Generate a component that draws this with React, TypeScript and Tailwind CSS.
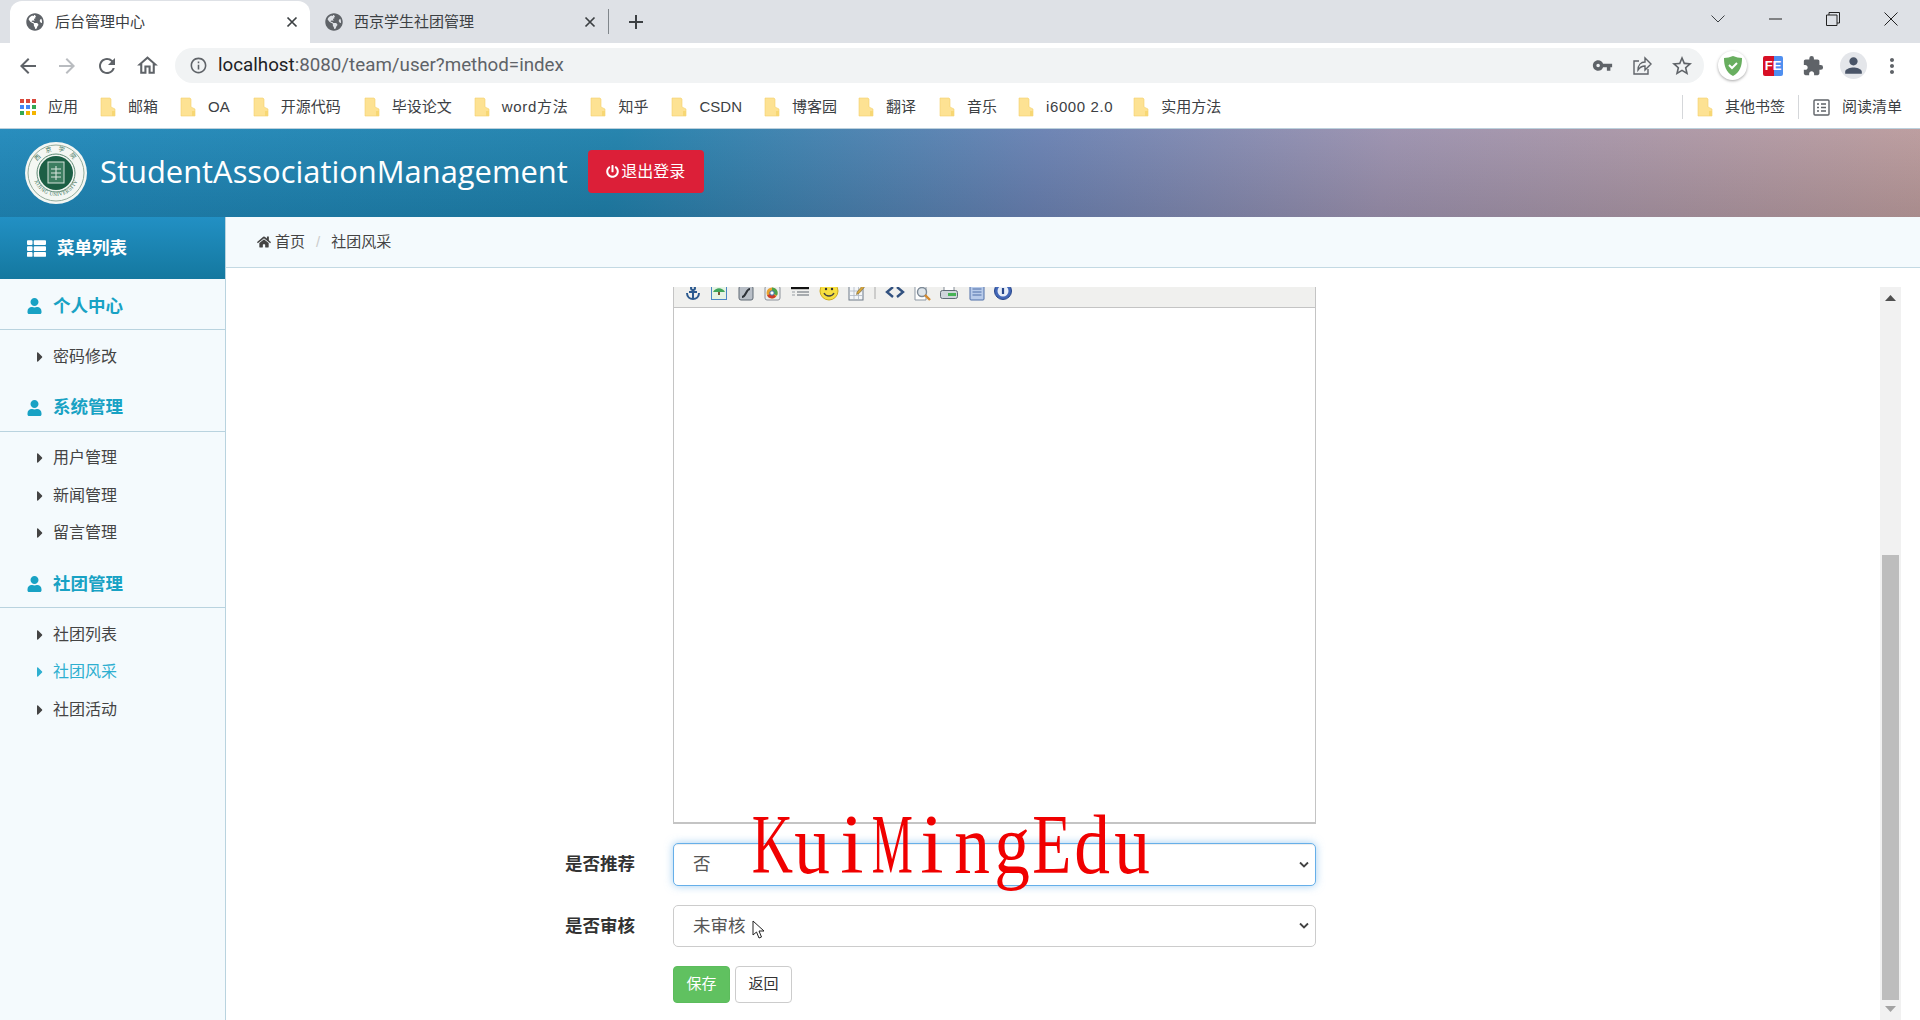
import type { ReactNode } from "react";
import {
  FaCaretRight,
  FaGlobeAmericas,
  FaHome,
  FaPowerOff,
  FaThList,
  FaUser,
} from "react-icons/fa";
import {
  MdArrowBack,
  MdArrowForward,
  MdExtension,
  MdInfoOutline,
  MdMoreVert,
  MdOutlineHome,
  MdPerson,
  MdRefresh,
  MdStarBorder,
  MdVpnKey,
} from "react-icons/md";

const bookmarks = [
  { name: "邮箱", cls: "ml-[22px]", text: "" },
  { name: "OA", cls: "ml-[22px]", text: "" },
  { name: "开源代码", cls: "ml-[23px]", text: "" },
  { name: "毕设论文", cls: "ml-[23px]", text: "" },
  { name: "word方法", cls: "ml-[22px]", text: "tracking-[0.7px]" },
  { name: "知乎", cls: "ml-[22px]", text: "" },
  { name: "CSDN", cls: "ml-[23px]", text: "" },
  { name: "博客园", cls: "ml-[22px]", text: "" },
  { name: "翻译", cls: "ml-[21px]", text: "" },
  { name: "音乐", cls: "ml-[23px]", text: "" },
  { name: "i6000 2.0", cls: "ml-[21px]", text: "tracking-[0.6px]" },
  { name: "实用方法", cls: "ml-[20px]", text: "" },
];

const menu = [
  { title: "个人中心", items: ["密码修改"] },
  { title: "系统管理", items: ["用户管理", "新闻管理", "留言管理"] },
  { title: "社团管理", items: ["社团列表", "社团风采", "社团活动"] },
];

const watermark = [
  { ch: "K", cls: "scale-x-[0.68]" },
  { ch: "u", cls: "scale-x-[0.85]" },
  { ch: "i", cls: "scale-x-100" },
  { ch: "M", cls: "scale-x-[0.55]" },
  { ch: "i", cls: "scale-x-100" },
  { ch: "n", cls: "scale-x-[0.85]" },
  { ch: "g", cls: "scale-x-[0.85]" },
  { ch: "E", cls: "scale-x-[0.76]" },
  { ch: "d", cls: "scale-x-[0.85]" },
  { ch: "u", cls: "scale-x-[0.85]" },
];

function Folder() {
  return (
    <svg width="16" height="20" viewBox="0 0 16 20" className="shrink-0">
      <path d="M1 1h9l1 1v8l4 2v7H1z" fill="#fde293" stroke="#f5d26b" strokeWidth="0.6" />
      <path d="M12 14h3v5h-3z" fill="#f7d774" />
    </svg>
  );
}

function Bookmark({ name, cls, text }: { name: string; cls: string; text: string }) {
  return (
    <div className={`flex items-center gap-[12px] ${cls}`}>
      <Folder />
      <span className={`whitespace-nowrap text-[15px] text-[#3c4043] ${text}`}>{name}</span>
    </div>
  );
}

function AppsIcon() {
  const colors = ["#d9483b", "#d9483b", "#d9483b", "#4285f4", "#4285f4", "#34a853", "#34a853", "#f4b400", "#f4b400"];
  return (
    <div className="grid h-[16px] w-[16px] grid-cols-3 gap-[2px]">
      {colors.map((c, i) => (
        <span key={i} className="h-[4px] w-[4px]" style={{ backgroundColor: c }} />
      ))}
    </div>
  );
}

function Tab({ title, cls }: { title: string; cls: string }) {
  return (
    <div className={`flex h-[42px] items-center rounded-t-[12px] pr-[12px] ${cls}`}>
      <FaGlobeAmericas className="shrink-0 text-[18px] text-[#5f6368]" />
      <span className="ml-[11px] flex-1 whitespace-nowrap text-[15px] text-[#3c4043]">{title}</span>
      <svg width="12" height="12" viewBox="0 0 12 12" stroke="#3c4043" strokeWidth="1.7">
        <path d="M1.5 1.5l9 9M10.5 1.5l-9 9" />
      </svg>
    </div>
  );
}

const toolbarIcons: { cls: string; icon: ReactNode }[] = [
  {
    cls: "w-[26px]",
    icon: (
      <g fill="none" stroke="#2c5a8f" strokeWidth="2">
        <circle cx="10" cy="7" r="2" />
        <path d="M10 9v9M4 12c0 4 3 6 6 6s6-2 6-6" />
        <path d="M6 11h8" />
      </g>
    ),
  },
  {
    cls: "w-[26px]",
    icon: (
      <g>
        <rect x="2.5" y="4.5" width="15" height="14" fill="#e6f3e4" stroke="#4a86c5" />
        <path d="M4 11c3-5 9-5 12 0z" fill="#3fa65a" />
        <path d="M9 11h2v3H9z" fill="#7a5a33" />
      </g>
    ),
  },
  {
    cls: "w-[27px]",
    icon: (
      <g>
        <rect x="3" y="5" width="14" height="14" rx="2" fill="#b9bfc7" stroke="#606a75" />
        <path d="M14 8c-4 0-4 8-8 8" fill="none" stroke="#2d3238" strokeWidth="2" />
      </g>
    ),
  },
  {
    cls: "w-[26px]",
    icon: (
      <g>
        <rect x="3" y="5" width="15" height="14" rx="2" fill="#eceef1" stroke="#8c929a" />
        <circle cx="10" cy="12" r="5.5" fill="#e9a32f" />
        <path d="M10 6.5a5.5 5.5 0 0 1 5 8L10 12z" fill="#4aa34c" />
        <path d="M5 14.5a5.5 5.5 0 0 0 9 1L10 12z" fill="#cc3a2c" />
        <circle cx="10" cy="12" r="2.2" fill="#fff" stroke="#3b6ea8" />
      </g>
    ),
  },
  {
    cls: "w-[30px]",
    icon: (
      <g>
        <path d="M1 7h18" stroke="#111" strokeWidth="2.4" />
        <path d="M7 11h12M7 14h12" stroke="#8f9499" strokeWidth="1.5" />
        <path d="M2 11h3M2 14h3" stroke="#b5b9bd" strokeWidth="1.5" />
      </g>
    ),
  },
  {
    cls: "w-[27px]",
    icon: (
      <g>
        <circle cx="10" cy="10" r="9" fill="#f7df3f" stroke="#cdaa1f" />
        <circle cx="7" cy="8" r="1.2" fill="#333" />
        <circle cx="13" cy="8" r="1.2" fill="#333" />
        <path d="M5 12c2 4 8 4 10 0" fill="none" stroke="#444" strokeWidth="1.4" />
      </g>
    ),
  },
  {
    cls: "w-[27px]",
    icon: (
      <g>
        <rect x="3" y="5" width="14" height="14" fill="#f4f6f8" stroke="#6f7b88" />
        <path d="M3 10h14M3 14.5h14M8 5v14M12.5 5v14" stroke="#aeb8c3" strokeWidth="0.8" />
        <path d="M11 11l6-7 2 1.5-6 7-2.5 1z" fill="#d6a53a" stroke="#6a5a30" strokeWidth="0.5" />
      </g>
    ),
  },
  {
    cls: "w-[12px]",
    icon: <path d="M10 5v13" stroke="#a8a8a8" strokeWidth="1" />,
  },
  {
    cls: "w-[27px]",
    icon: (
      <path d="M8 6l-6 5 6 5M12 6l6 5-6 5" fill="none" stroke="#32517f" strokeWidth="2.4" />
    ),
  },
  {
    cls: "w-[27px]",
    icon: (
      <g>
        <path d="M3 4h11v15H3z" fill="#fff" stroke="#8c97a3" />
        <circle cx="10" cy="11" r="4.5" fill="#dfe6ec" stroke="#7d8a97" strokeWidth="1.4" />
        <path d="M13 14l5 5" stroke="#d68a2e" strokeWidth="2.4" />
      </g>
    ),
  },
  {
    cls: "w-[28px]",
    icon: (
      <g>
        <path d="M5 5h10v5H5z" fill="#fff" stroke="#838c96" />
        <rect x="1.5" y="9.5" width="17" height="8" rx="2" fill="#cfd5db" stroke="#5f6a75" />
        <path d="M9 12h8v3H9z" fill="#47b356" />
      </g>
    ),
  },
  {
    cls: "w-[27px]",
    icon: (
      <g>
        <rect x="3" y="4" width="14" height="15" rx="1" fill="#b8cbea" stroke="#4f6fa8" />
        <path d="M5.5 8h9M5.5 11h9M5.5 14h9" stroke="#4f6fa8" strokeWidth="1" />
      </g>
    ),
  },
  {
    cls: "w-[26px]",
    icon: (
      <g>
        <circle cx="10" cy="10" r="8.5" fill="#4267b8" stroke="#26458a" />
        <circle cx="10" cy="10" r="5.5" fill="#e8eef8" />
        <path d="M10 7v6" stroke="#26458a" strokeWidth="2.2" />
      </g>
    ),
  },
];

function Logo() {
  return (
    <svg width="62" height="62" viewBox="0 0 62 62" className="shrink-0">
      <defs>
        <path id="seal-bottom" d="M8 31a23 23 0 0 0 46 0" />
        <path id="seal-top" d="M9 31a22 22 0 0 1 44 0" />
      </defs>
      <circle cx="31" cy="31" r="31" fill="#f4f7f3" />
      <circle cx="31" cy="31" r="28" fill="none" stroke="#93ac9c" strokeWidth="1" />
      <circle cx="31" cy="31" r="17" fill="#1c5f45" />
      <circle cx="31" cy="31" r="19" fill="none" stroke="#5f8a75" strokeWidth="1" />
      <rect x="23" y="20" width="16" height="21" fill="#3c7d60" stroke="#d5e2da" strokeWidth="1" />
      <path d="M26 27h10M26 31h10M26 35h10M31 24v14" stroke="#d9e6de" strokeWidth="1.1" />
      <text fontSize="6" fill="#2f6a50" fontFamily="'Noto Sans CJK SC',sans-serif" letterSpacing="6">
        <textPath href="#seal-top" startOffset="12">
          西京学院
        </textPath>
      </text>
      <text fontSize="5.2" fill="#2f6a50" fontFamily="'Liberation Serif',serif" letterSpacing="0.4">
        <textPath href="#seal-bottom" startOffset="8">
          XIJING UNIVERSITY
        </textPath>
      </text>
    </svg>
  );
}

function Sidebar() {
  return (
    <aside className="w-[226px] shrink-0 border-r border-[#b9d3df] bg-[#f4fafd]">
      <div className="flex h-[62px] items-center bg-[linear-gradient(to_bottom,#2290c4,#14789f)] pl-[27px] text-white">
        <FaThList className="text-[19px]" />
        <span className="ml-[11px] text-[17.5px] font-bold">菜单列表</span>
      </div>
      <div className="h-[1px]" />
      {menu.map((group) => (
        <div key={group.title}>
          <div className="flex h-[50px] items-center border-b border-[#b9d3df] pl-[27px] pt-[3px] text-[#18a2c4]">
            <FaUser className="w-[15px] text-[16px]" />
            <span className="ml-[11px] text-[17.5px] font-bold">{group.title}</span>
          </div>
          <ul className="border-b border-[#b9d3df] pb-[6px] pt-[8px] last:border-b-0">
            {group.items.map((item) => (
              <li
                key={item}
                className={`flex h-[37.5px] items-center pl-[35px] text-[16px] ${
                  item === "社团风采" ? "text-[#2eafd0]" : "text-[#444]"
                }`}
              >
                <FaCaretRight className="w-[10px] text-[16px]" />
                <span className="ml-[8px]">{item}</span>
              </li>
            ))}
          </ul>
        </div>
      ))}
    </aside>
  );
}

function SelectField({ label, value, cls }: { label: string; value: string; cls: string }) {
  return (
    <div className="flex items-center">
      <label className="-ml-[108px] w-[108px] text-[17.5px] font-bold text-[#333]">{label}</label>
      <div className="relative w-[643px]">
        <select
          className={`w-full appearance-none rounded-[5px] border bg-white px-[19px] text-[17.5px] text-[#555] outline-none ${cls}`}
        >
          <option>{value}</option>
        </select>
        <svg
          width="10"
          height="7"
          viewBox="0 0 10 7"
          fill="none"
          stroke="#444"
          strokeWidth="1.8"
          className="pointer-events-none absolute right-[7px] top-1/2 -translate-y-1/2"
        >
          <path d="M1 1l4 4 4-4" />
        </svg>
      </div>
    </div>
  );
}

export default function App() {
  return (
    <div className="relative flex h-[1020px] w-[1920px] flex-col overflow-hidden bg-white font-['Liberation_Sans','Noto_Sans_CJK_SC',sans-serif] text-[#333]">
      {/* tab strip */}
      <div className="flex h-[43px] shrink-0 items-end bg-[#dee1e6] pl-[10px]">
        <Tab title="后台管理中心" cls="w-[300px] bg-white pl-[16px]" />
        <Tab title="西京学生社团管理" cls="w-[298px] pl-[15px]" />
        <div className="mb-[9px] h-[25px] w-px bg-[#80868b]" />
        <svg width="16" height="16" viewBox="0 0 16 16" stroke="#3c4043" strokeWidth="2" className="mb-[13px] ml-[19px]">
          <path d="M8 1v14M1 8h14" />
        </svg>
        <div className="flex h-[43px] flex-1 items-center justify-end pb-[6px] pr-[22px]">
          <svg width="14" height="8" viewBox="0 0 14 8" fill="none" stroke="#3c4043">
            <path d="M0.5 0.5L7 7l6.5-6.5" />
          </svg>
          <svg width="13" height="2" viewBox="0 0 13 2" stroke="#222" className="ml-[44px]">
            <path d="M0 1h13" />
          </svg>
          <svg width="14" height="14" viewBox="0 0 14 14" fill="none" stroke="#222" className="ml-[44px]">
            <path d="M3 3V0.5h10.5V11H11M0.5 3H11v10.5H0.5z" />
          </svg>
          <svg width="14" height="14" viewBox="0 0 14 14" fill="none" stroke="#222" className="ml-[44px]">
            <path d="M0.5 0.5l13 13M13.5 0.5l-13 13" />
          </svg>
        </div>
      </div>

      {/* address bar */}
      <div className="flex h-[43px] shrink-0 items-center bg-white pl-[16px] pt-[2px] text-[#5f6368]">
        <MdArrowBack className="text-[24px] text-[#5f6368]" />
        <MdArrowForward className="ml-[15px] text-[24px] text-[#b9bcc0]" />
        <MdRefresh className="ml-[16px] text-[24px]" />
        <MdOutlineHome className="ml-[16px] text-[25px]" />
        <div className="ml-[15px] flex h-[35px] w-[1529px] items-center rounded-full bg-[#f1f3f4] pl-[14px] pr-[10px]">
          <MdInfoOutline className="text-[19px] text-[#5f6368]" />
          <span className="ml-[10px] flex-1 whitespace-nowrap font-['Roboto',sans-serif] text-[18.75px] text-[#5f6368]">
            <span className="text-[#202124]">localhost</span>:8080/team/user?method=index
          </span>
          <MdVpnKey className="text-[21px]" />
          <svg width="20" height="20" viewBox="0 0 20 20" fill="none" stroke="#5f6368" strokeWidth="1.4" className="ml-[19px]">
            <path d="M7 5H2v13h14v-5" />
            <path d="M6 14c0-5 3-8 7-8V2l6 6-6 6v-4c-3 0-5 1-7 4z" />
          </svg>
          <MdStarBorder className="ml-[18px] text-[24px]" />
        </div>
        <div className="ml-[14px] flex h-[29px] w-[29px] items-center justify-center rounded-full bg-white shadow-[0_1px_3px_rgba(0,0,0,.35)]">
          <svg width="18" height="20" viewBox="0 0 18 20">
            <path d="M9 0C6 1 3 2 0 2c0 8 2 14 9 18 7-4 9-10 9-18-3 0-6-1-9-2z" fill="#68ae5f" />
            <path d="M5 9l3 3 5-5" fill="none" stroke="#fff" strokeWidth="2" />
          </svg>
        </div>
        <div className="ml-[16px] flex h-[20px] w-[20px] items-center justify-center rounded-[2px] bg-[linear-gradient(to_right,#d70f25_55%,#4f8ff0_55%)] font-['Liberation_Sans',sans-serif] text-[13px] font-bold leading-none text-white">
          FE
        </div>
        <MdExtension className="ml-[19px] text-[22px] text-[#5f6368]" />
        <div className="ml-[16px] flex h-[27px] w-[27px] items-center justify-center rounded-full bg-[#e4e6ea]">
          <MdPerson className="text-[25px] text-[#4a5568]" />
        </div>
        <MdMoreVert className="ml-[13px] text-[24px]" />
      </div>

      {/* bookmarks */}
      <div className="flex h-[43px] shrink-0 items-center border-b border-[#bcd0dc] bg-white pl-[20px]">
        <AppsIcon />
        <span className="ml-[12px] text-[15px] text-[#3c4043]">应用</span>
        {bookmarks.map((b) => (
          <Bookmark key={b.name} {...b} />
        ))}
        <div className="ml-auto flex items-center pr-[18px]">
          <div className="h-[24px] w-px bg-[#d5d7da]" />
          <div className="ml-[14px] flex items-center gap-[12px]">
            <Folder />
            <span className="text-[15px] text-[#3c4043]">其他书签</span>
          </div>
          <div className="ml-[13px] h-[24px] w-px bg-[#d5d7da]" />
          <svg width="17" height="17" viewBox="0 0 17 17" fill="none" stroke="#5f6368" strokeWidth="1.4" className="ml-[14px]">
            <rect x="1" y="1" width="15" height="15" rx="1" />
            <path d="M4 5h2M4 8.5h2M4 12h2M8 5h5M8 8.5h5M8 12h5" />
          </svg>
          <span className="ml-[12px] text-[15px] text-[#3c4043]">阅读清单</span>
        </div>
      </div>

      {/* site header */}
      <header className="flex h-[88px] shrink-0 items-center bg-[linear-gradient(to_bottom,rgba(255,255,255,.04),rgba(0,0,0,.1)),linear-gradient(100deg,#2089bb_0%,#1f80ab_32%,#6981b2_54%,#9b91ae_72%,#bb9b9c_100%)] pl-[25px]">
        <Logo />
        <span className="mb-[4px] ml-[13px] font-['Open_Sans',sans-serif] text-[30.9px] text-white">
          StudentAssociationManagement
        </span>
        <button className="mb-[4px] ml-[20px] flex h-[43px] w-[116px] items-center justify-center rounded-[4px] bg-[#dc1f38] pt-[1px] text-[16px] text-white">
          <FaPowerOff className="text-[13px]" />
          <span className="ml-[2px]">退出登录</span>
        </button>
      </header>

      <div className="flex min-h-0 flex-1">
        <Sidebar />
        <main className="flex min-w-0 flex-1 flex-col">
          <nav className="flex h-[51px] shrink-0 items-center border-b border-[#c3d9e3] bg-[#f4fafd] pl-[31px] text-[15px] text-[#444]">
            <FaHome className="text-[14px]" />
            <span className="ml-[4px]">首页</span>
            <span className="mx-[11px] text-[#ccc]">/</span>
            <span>社团风采</span>
          </nav>
          <div className="flex min-h-0 flex-1">
            <div className="flex min-w-0 flex-1 flex-col pl-[447px] pt-[19px]">
              <div className="flex h-[537px] w-[643px] shrink-0 flex-col border border-b-2 border-t-0 border-[#c4c4c4]">
                <div className="h-[21px] shrink-0 overflow-hidden border-b border-[#c4c4c4] bg-[#f0f0ee] pl-[6px]">
                  <div className="-mt-[6px] flex">
                    {toolbarIcons.map((t, i) => (
                      <span key={i} className={`flex shrink-0 justify-center ${t.cls}`}>
                        <svg width="20" height="20" viewBox="0 0 20 20" className="shrink-0">
                          {t.icon}
                        </svg>
                      </span>
                    ))}
                  </div>
                </div>
                <div className="flex-1 bg-white" />
              </div>

              <div className="mt-[19px]">
                <SelectField
                  label="是否推荐"
                  value="否"
                  cls="h-[43px] border-[#66afe9] shadow-[inset_0_1px_1px_rgba(0,0,0,.075),0_0_8px_rgba(102,175,233,.6)]"
                />
              </div>
              <div className="mt-[19px]">
                <SelectField label="是否审核" value="未审核" cls="h-[42px] border-[#ccc]" />
              </div>
              <div className="mt-[19px] flex gap-[5px]">
                <button className="h-[37px] w-[57px] rounded-[4px] border border-[#5cbc5c] bg-[#60c160] text-[15px] text-white">
                  保存
                </button>
                <button className="h-[37px] w-[57px] rounded-[4px] border border-[#ccc] bg-white text-[15px] text-[#333]">
                  返回
                </button>
              </div>
            </div>

            {/* scrollbar */}
            <div className="mr-[19px] mt-[19px] flex w-[21px] shrink-0 flex-col items-center bg-[#f1f1f1]">
              <svg width="11" height="6" viewBox="0 0 11 6" className="mt-[8px]">
                <path d="M5.5 0L11 6H0z" fill="#505050" />
              </svg>
              <div className="mt-[254px] h-[445px] w-[17px] bg-[#bdbdbd]" />
              <svg width="11" height="6" viewBox="0 0 11 6" className="mt-[6px]">
                <path d="M5.5 6L11 0H0z" fill="#a3a3a3" />
              </svg>
            </div>
          </div>
        </main>
      </div>

      {/* recording watermark and mouse pointer */}
      <div className="pointer-events-none absolute left-[752px] top-[795px] flex font-['Liberation_Serif',serif] text-[84px] leading-[1.2] text-[#f00000]">
        {watermark.map((l, i) => (
          <span key={i} className="flex w-[40px] justify-center">
            <span className={`inline-block ${l.cls}`}>{l.ch}</span>
          </span>
        ))}
      </div>
      <svg width="13" height="19" viewBox="0 0 13 19" className="absolute left-[752px] top-[920px]">
        <path d="M1 1v14l3.5-3 2.5 6 2.5-1-2.5-6H12z" fill="#fff" stroke="#222" />
      </svg>
    </div>
  );
}
